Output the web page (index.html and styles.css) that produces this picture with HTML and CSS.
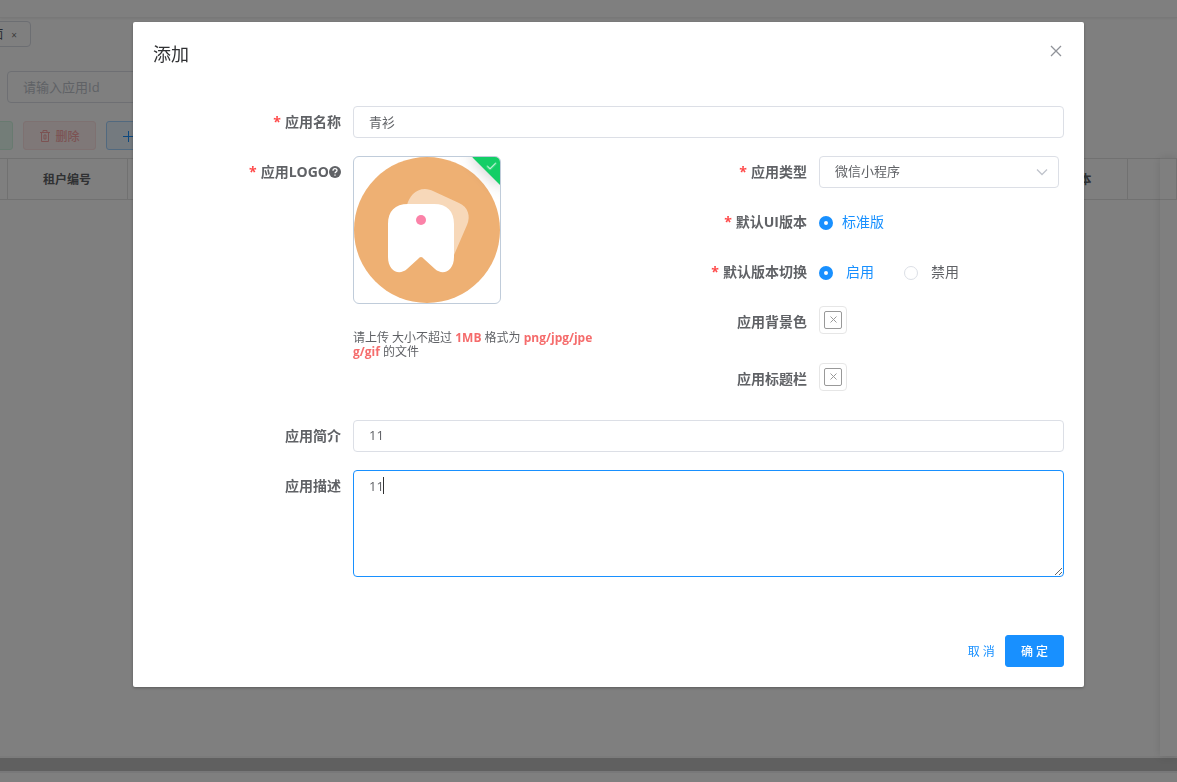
FILE: index.html
```html
<!DOCTYPE html>
<html lang="zh-CN">

<head>
    <meta charset="utf-8">
    <title>添加</title>
    <link rel="stylesheet" href="styles.css">
</head>

<body>

    <div class="page">
        <div class="topbar"></div>
        <div class="tabs">
            <div class="tab">应用页面<button class="tab-close" aria-label="关闭标签">×</button></div>
        </div>
        <div class="search">
            <input class="search-input" type="text" placeholder="请输入应用Id" aria-label="应用Id">
        </div>
        <div class="toolbar">
            <button class="btn-plain btn-green" aria-label="新增"></button>
            <button class="btn-plain btn-red">
                <svg width="12" height="12" viewBox="0 0 12 12" fill="none" stroke="currentColor">
                    <path d="M1 2.5h10M4 2.5v-2h4v2M2.5 2.5v9h7v-9M5 5v4h2V5z" />
                </svg>
                删除
            </button>
            <button class="btn-plain btn-blue" aria-label="导入">
                <svg width="12" height="12" viewBox="0 0 12 12" fill="none" stroke="currentColor">
                    <path d="M6.5 1v11M1 6.5h11" />
                </svg>
            </button>
        </div>
        <div class="grid">
            <table class="grid-table">
                <tr>
                    <th class="col-check"></th>
                    <th class="col-fixed">租户编号</th>
                    <th></th>
                    <th class="col-fixed">默认版本</th>
                    <th class="col-last"></th>
                </tr>
            </table>
            <div class="grid-pinned"></div>
        </div>
        <div class="scrollbar"></div>
        <div class="bottom"></div>
    </div>

    <div class="overlay">
        <form class="dialog" role="dialog" aria-labelledby="dialogTitle">
            <div class="dialog-header">
                <span class="dialog-title" id="dialogTitle">添加</span>
                <button type="button" class="dialog-close" aria-label="关闭">
                    <svg width="12" height="12" viewBox="0 0 12 12" fill="none" stroke="currentColor" stroke-width="1.3">
                        <path d="M1 1l10 10M11 1L1 11" />
                    </svg>
                </button>
            </div>

            <div class="dialog-body">
                <div class="form-item">
                    <label class="label required" for="appName">应用名称</label>
                    <input class="field" id="appName" type="text" value="青衫">
                </div>

                <div class="columns">
                    <div class="form-item">
                        <label class="label required" for="appLogo">应用LOGO<svg class="help" width="12" height="12" viewBox="0 0 12 12" fill="none">
                                <circle cx="6" cy="6" r="6" fill="#606266" />
                                <path d="M4 4.7C4 2 8 2 8 4.5C8 6 6 5.8 6 7.3M6 8.4v1.3" stroke="#fff" stroke-width="1.3" />
                            </svg></label>
                        <div class="content">
                            <label class="upload">
                                <input class="upload-input" id="appLogo" type="file">
                                <svg class="upload-image" viewBox="0 0 146 146">
                                    <circle cx="73" cy="73" r="73" fill="#eeb073" />
                                    <path d="M53 48C55 40 61 32 71 32C74 32 77 33 79 34L105 46C114 50 117 59 113 68L100 98L80 60Z" fill="#f7d8b9" />
                                    <path d="M34 67C34 54 41 47 54 47H80C93 47 100 54 100 67V100C100 114 89 119 81 112L70 102Q67 98 64 102L53 112C45 119 34 114 34 100Z" fill="#fff" />
                                    <circle cx="67" cy="63" r="5" fill="#fb82a8" />
                                </svg>
                                <span class="upload-done">
                                    <svg width="12" height="12" viewBox="0 0 12 12" fill="none" stroke="#fff">
                                        <path d="M1.500 5.500l3 3L10.500 2.500" />
                                    </svg>
                                </span>
                            </label>
                            <p class="tip">请上传 大小不超过 <b>1MB</b> 格式为 <b>png/jpg/jpeg/gif</b> 的文件</p>
                        </div>
                    </div>

                    <div class="column">
                        <div class="form-item">
                            <label class="label required" for="appType">应用类型</label>
                            <div class="select">
                                <select class="field" id="appType">
                                    <option>微信小程序</option>
                                </select>
                                <svg class="select-arrow" width="12" height="12" viewBox="0 0 12 12" fill="none" stroke="currentColor" stroke-width="1.3">
                                    <path d="M1 3.500l5 5 5-5" />
                                </svg>
                            </div>
                        </div>
                        <div class="form-item">
                            <span class="label required">默认UI版本</span>
                            <div class="radios">
                                <label class="radio"><input type="radio" name="uiVersion" checked><span>标准版</span></label>
                            </div>
                        </div>
                        <div class="form-item">
                            <span class="label required">默认版本切换</span>
                            <div class="radios wide">
                                <label class="radio"><input type="radio" name="switchable" checked><span>启用</span></label>
                                <label class="radio"><input type="radio" name="switchable"><span>禁用</span></label>
                            </div>
                        </div>
                        <div class="form-item tall">
                            <label class="label" for="bgColor">应用背景色</label>
                            <button type="button" class="color" id="bgColor">
                                <span class="color-inner">
                                    <svg width="12" height="12" viewBox="0 0 12 12" fill="none" stroke="currentColor">
                                        <path d="M3.500 2.500l6 6M9.500 2.500l-6 6" />
                                    </svg>
                                </span>
                            </button>
                        </div>
                        <div class="form-item tall">
                            <label class="label" for="titleColor">应用标题栏</label>
                            <button type="button" class="color" id="titleColor">
                                <span class="color-inner">
                                    <svg width="12" height="12" viewBox="0 0 12 12" fill="none" stroke="currentColor">
                                        <path d="M3.500 2.500l6 6M9.500 2.500l-6 6" />
                                    </svg>
                                </span>
                            </button>
                        </div>
                    </div>
                </div>

                <div class="form-item">
                    <label class="label" for="appIntro">应用简介</label>
                    <input class="field" id="appIntro" type="text" value="11">
                </div>
                <div class="form-item">
                    <label class="label" for="appDesc">应用描述</label>
                    <div class="textarea">
                        <textarea class="field" id="appDesc">11</textarea>
                        <span class="caret"></span>
                    </div>
                </div>
            </div>

            <div class="dialog-footer">
                <button type="button" class="btn-text">取 消</button>
                <button type="button" class="btn-primary">确 定</button>
            </div>
        </form>
    </div>

</body>

</html>
```
FILE: styles.css
```css
* {
    box-sizing: border-box;
}

body {
    margin: 0;
    overflow: hidden;
    background-color: #fff;
    color: #606266;
    font-family: "Open Sans", "Noto Sans CJK SC", sans-serif;
    font-size: 14px;
}

button,
input,
select,
textarea {
    font-family: inherit;
    margin: 0;
}

button {
    cursor: pointer;
}

svg {
    display: block;
    flex: none;
}

/* Page behind the dialog */
.page {
    display: flex;
    flex-direction: column;
    height: 100vh;
}

.topbar {
    height: 18px;
    border-bottom: 1px solid #f0f0f0;
    box-shadow: 0 1px 2px rgba(0, 0, 0, .06);
}

.tabs {
    display: flex;
    margin: 3px 0 0 -64px;
}

.tab {
    display: flex;
    align-items: center;
    justify-content: flex-end;
    gap: 6px;
    width: 95px;
    height: 26px;
    padding-right: 11px;
    border: 1px solid #d8dce5;
    border-radius: 4px;
    color: #495060;
    font-size: 12px;
    white-space: nowrap;
}

.tab-close {
    border: none;
    background: none;
    padding: 2px 2px 0;
    color: #777;
    font-size: 10px;
}

.search {
    margin: 24px 0 0 7px;
}

.search-input {
    display: block;
    width: 240px;
    height: 32px;
    padding: 0 15px;
    border: 1px solid #dcdfe6;
    border-radius: 4px;
    font-size: 13px;
}

.search-input::placeholder {
    color: #c0c4cc;
}

.toolbar {
    display: flex;
    gap: 10px;
    margin: 18px 0 8px -60px;
}

.btn-plain {
    display: flex;
    align-items: center;
    justify-content: center;
    gap: 4px;
    width: 73px;
    height: 29px;
    padding: 0;
    border: 1px solid;
    border-radius: 3px;
    font-size: 12px;
}

.btn-green {
    border-color: #d0f5e0;
    background-color: #e7faf0;
}

.btn-red {
    border-color: #fde2e2;
    background-color: #fef0f0;
    color: #f9a7a7;
    font-weight: 500;
}

.btn-blue {
    justify-content: flex-start;
    padding-left: 15px;
    border-color: #a3d3ff;
    background-color: #e8f4ff;
    color: #1890ff;
}

.grid {
    position: relative;
    flex: 1;
    border-bottom: 2px solid #f6f6f6;
}

.grid-table {
    width: 100%;
    height: 42px;
    table-layout: fixed;
    border-collapse: collapse;
}

.grid-table th {
    padding: 0;
    border: 1px solid #e2e2e2;
    border-left: none;
    font-size: 12px;
}

.col-check {
    width: 7px;
}

.col-fixed {
    width: 120px;
}

.col-last {
    width: 49px;
}

.grid-pinned {
    position: absolute;
    top: 0;
    right: 0;
    bottom: 0;
    width: 17px;
    box-shadow: 0 0 10px rgba(0, 0, 0, .12);
}

.scrollbar {
    height: 13px;
    background-color: #c0c0c0;
}

.bottom {
    height: 11px;
    border-top: 2px solid #f1f1f3;
}

/* Dialog */
.overlay {
    position: fixed;
    inset: 0;
    padding: 22px 93px 0 133px;
    background-color: rgba(0, 0, 0, .5);
}

.dialog {
    border-radius: 2px;
    background-color: #fff;
    box-shadow: 0 1px 3px rgba(0, 0, 0, .3);
}

.dialog-header {
    display: flex;
    justify-content: space-between;
    align-items: center;
    padding: 20px 20px 10px;
}

.dialog-title {
    color: #303133;
    font-size: 18px;
    line-height: 24px;
}

.dialog-close {
    padding: 2px;
    margin-bottom: 6px;
    border: none;
    background: none;
    color: #909399;
}

.dialog-body {
    display: flex;
    flex-direction: column;
    gap: 18px;
    padding: 30px 20px 48px;
}

.columns {
    display: grid;
    grid-template-columns: 1fr 1fr;
    gap: 26px;
    padding-right: 5px;
}

.column {
    display: flex;
    flex-direction: column;
    gap: 18px;
}

.form-item {
    display: flex;
    align-items: flex-start;
}

.form-item.tall {
    height: 39px;
}

.label {
    display: flex;
    flex: none;
    justify-content: flex-end;
    align-items: center;
    width: 200px;
    padding-right: 12px;
    font-weight: 700;
    line-height: 32px;
}

.label.required::before {
    content: "*";
    margin-right: 4px;
    color: #ff4949;
}

.content {
    flex: 1;
}

.field {
    display: block;
    flex: 1;
    width: 100%;
    height: 32px;
    padding: 0 15px 2px;
    border: 1px solid #dcdfe6;
    border-radius: 4px;
    outline: none;
    background-color: #fff;
    color: #606266;
    font-size: 13px;
    appearance: none;
}

.select,
.textarea {
    position: relative;
    flex: 1;
}

.select-arrow {
    position: absolute;
    top: 10px;
    right: 11px;
    color: #c0c4cc;
    pointer-events: none;
}

.textarea .field {
    height: 107px;
    padding: 5px 15px;
    border-color: #1890ff;
    line-height: 20px;
    resize: vertical;
    caret-color: transparent;
}

.caret {
    position: absolute;
    top: 7px;
    left: 30px;
    width: 1px;
    height: 17px;
    background-color: #303133;
}

/* Logo upload */
.upload {
    position: relative;
    display: block;
    width: 148px;
    height: 148px;
    overflow: hidden;
    border: 1px solid #c0ccda;
    border-radius: 6px;
    cursor: pointer;
}

.upload-input {
    position: absolute;
    opacity: 0;
}

.upload-image {
    width: 100%;
}

.upload-done {
    position: absolute;
    top: -6px;
    right: -15px;
    display: flex;
    justify-content: center;
    width: 40px;
    height: 24px;
    background-color: #13ce66;
    box-shadow: 0 0 16px 1px rgba(0, 0, 0, .2);
    transform: rotate(45deg);
}

.upload-done svg {
    margin-top: 11px;
    transform: rotate(-45deg);
}

.tip {
    margin: 27px -4px 0 0;
    font-size: 12px;
    line-height: 14px;
    word-break: break-all;
}

.tip b {
    color: #f56c6c;
}

/* Radios */
.radios {
    display: flex;
    gap: 30px;
}

.radio {
    display: flex;
    align-items: center;
    gap: 9px;
    line-height: 32px;
    cursor: pointer;
}

.wide .radio {
    gap: 13px;
}

.radio input {
    width: 14px;
    height: 14px;
    margin-top: 2px;
    border: 1px solid #dcdfe6;
    border-radius: 50%;
    background-color: #fff;
    appearance: none;
}

.radio input:checked {
    border: 5px solid #1890ff;
}

.radio input:checked + span {
    color: #1890ff;
}

/* Color pickers */
.color {
    width: 28px;
    height: 28px;
    padding: 4px;
    border: 1px solid #e6e6e6;
    border-radius: 4px;
    background: none;
    color: #999;
}

.color-inner {
    display: flex;
    justify-content: center;
    align-items: center;
    width: 18px;
    height: 18px;
    border: 1px solid #999;
    border-radius: 2px;
}

.dialog-footer {
    display: flex;
    justify-content: flex-end;
    gap: 10px;
    padding: 10px 20px 20px;
}

.btn-text {
    padding: 0;
    border: none;
    background: none;
    color: #1890ff;
    font-size: 12px;
}

.btn-primary {
    height: 32px;
    padding: 0 15px;
    border: 1px solid #1890ff;
    border-radius: 3px;
    background-color: #1890ff;
    color: #fff;
    font-size: 12px;
    font-weight: 500;
}
```
